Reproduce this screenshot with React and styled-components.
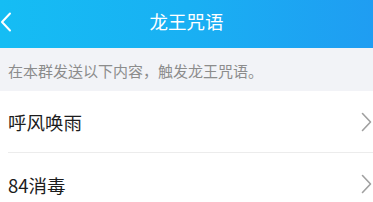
import React from 'react';
import styled, { createGlobalStyle } from 'styled-components';

const GlobalStyle = createGlobalStyle`
  html, body {
    margin: 0;
    padding: 0;
    background: #ffffff;
  }
  body {
    font-family: "Noto Sans CJK SC", "Noto Sans", sans-serif;
    overflow: hidden;
  }
`;

const Page = styled.div`
  width: 373px;
  height: 202px;
  overflow: hidden;
  background: #ffffff;
  display: flex;
  flex-direction: column;
`;

const Header = styled.header`
  height: 48px;
  flex-shrink: 0;
  position: relative;
  display: flex;
  align-items: center;
  justify-content: center;
  background: linear-gradient(90deg, #15bdf4 0%, #19b0f3 50%, #1f9df2 100%);
`;

const BackButton = styled.button`
  position: absolute;
  left: 0;
  top: 11px;
  width: 16px;
  height: 22px;
  padding: 0;
  border: none;
  background: transparent;
  display: flex;
  align-items: center;
`;

const Title = styled.h1`
  margin: 0;
  font-size: 18.5px;
  font-weight: 400;
  color: #ffffff;
  line-height: 1;
  margin-top: -5px;
`;

const Hint = styled.div`
  height: 43px;
  flex-shrink: 0;
  background: #f2f3f7;
  display: flex;
  align-items: center;
  padding: 0 8px;
  padding-top: 2px;
  box-sizing: border-box;
  font-size: 15px;
  color: #8c8c8c;
`;

const List = styled.ul`
  list-style: none;
  margin: 0;
  padding: 0;
`;

const Row = styled.li`
  height: 62px;
  display: flex;
  align-items: center;
  justify-content: space-between;
  padding: 0 1px 0 8px;
  position: relative;
  &::after {
    content: '';
    display: ${p => (p.$last ? 'none' : 'block')};
    position: absolute;
    left: 8px;
    right: 0;
    bottom: 0;
    height: 1px;
    background: #ececec;
  }
`;

const Label = styled.span`
  font-size: 18.5px;
  color: #1c1c1c;
  margin-top: ${p => (p.$last ? '2px' : '0')};
`;

const Chevron = ({ color = '#a0a0a0', w = 11, h = 20, stroke = 1.6 }) => (
  <svg width={w} height={h} viewBox={`0 0 ${w} ${h}`} fill="none">
    <path
      d={`M1.5 1.5 L${w - 1.5} ${h / 2} L1.5 ${h - 1.5}`}
      stroke={color}
      strokeWidth={stroke}
      strokeLinecap="round"
      strokeLinejoin="round"
    />
  </svg>
);

const BackIcon = () => (
  <svg width="12" height="20" viewBox="0 0 12 20" fill="none">
    <path
      d="M10 1.5 L2 10 L10 18.5"
      stroke="#ffffff"
      strokeWidth="2"
      strokeLinecap="round"
      strokeLinejoin="round"
    />
  </svg>
);

const items = ['呼风唤雨', '84消毒'];

export default function App() {
  return (
    <>
      <GlobalStyle />
      <Page>
        <Header>
          <BackButton aria-label="返回">
            <BackIcon />
          </BackButton>
          <Title>龙王咒语</Title>
        </Header>
        <Hint>在本群发送以下内容，触发龙王咒语。</Hint>
        <List>
          {items.map((item, i) => (
            <Row key={item} $last={i === items.length - 1}>
              <Label $last={i === items.length - 1}>{item}</Label>
              <Chevron />
            </Row>
          ))}
        </List>
      </Page>
    </>
  );
}
